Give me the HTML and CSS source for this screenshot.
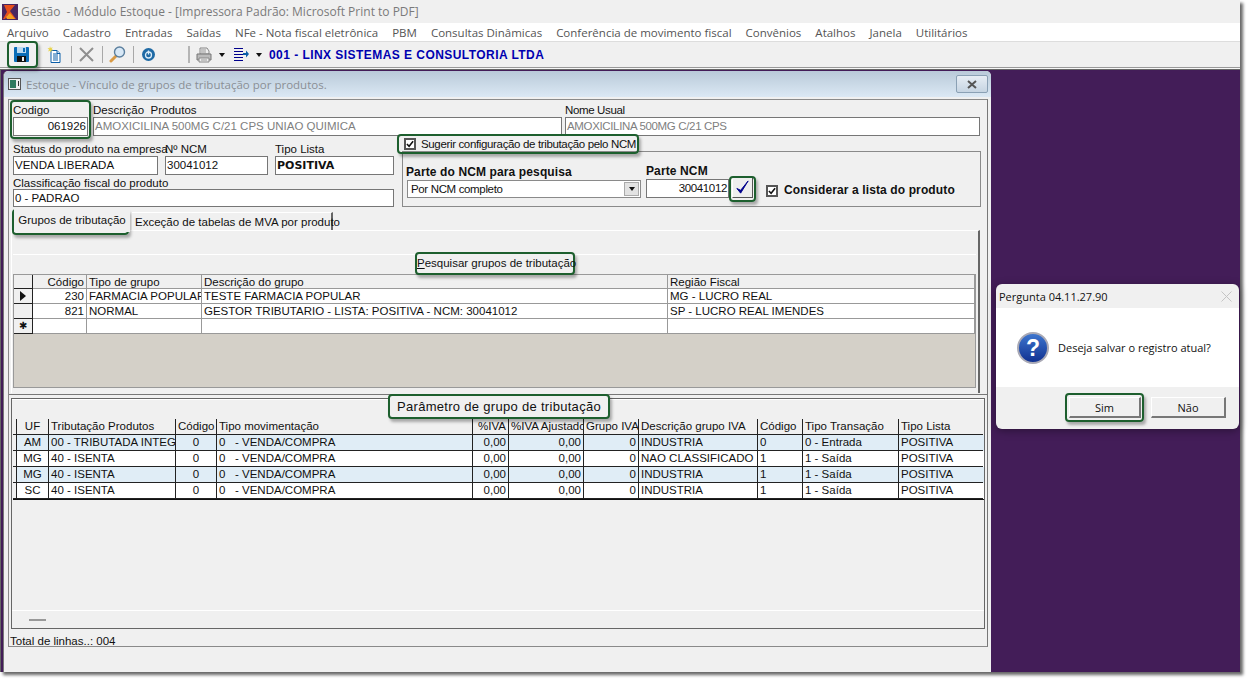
FILE: index.html
```html
<!DOCTYPE html>
<html lang="pt-BR">
<head>
<meta charset="utf-8">
<title>Gestão - Módulo Estoque</title>
<link rel="stylesheet" href="styles.css">
</head>
<body>
<div class="screen">
  <div class="app">
    <div class="titlebar">
      <svg class="logo" viewBox="0 0 16 16"><rect width="16" height="16" fill="#4a2560"/><path d="M2 1h11L8 7l6 8H9L6 11l-3 4H1l4-7z" fill="#e8501c"/><path d="M4 13l4-4 5 6H5z" fill="#f5a020"/></svg>
      <span class="apptitle">Gestão&nbsp; - Módulo Estoque - [Impressora Padrão: Microsoft Print to PDF]</span>
    </div>
    <nav class="menubar">
      <span>Arquivo</span><span>Cadastro</span><span>Entradas</span><span>Saídas</span><span>NFe - Nota fiscal eletrônica</span><span>PBM</span><span>Consultas Dinâmicas</span><span>Conferência de movimento fiscal</span><span>Convênios</span><span>Atalhos</span><span>Janela</span><span>Utilitários</span>
    </nav>
    <div class="toolbar">
      <svg class="ti i-save" viewBox="0 0 15 15"><rect width="15" height="15" rx="1" fill="#0b6db8"/><rect x="3" y="0" width="9" height="6" fill="#bcd9f0"/><rect x="9" y="1" width="2" height="4" fill="#0b6db8"/><rect x="3" y="9" width="9" height="6" fill="#111"/><rect x="8" y="10" width="2" height="4" fill="#eee"/></svg>
      <svg class="ti i-new" viewBox="0 0 15 17"><path d="M4 4.5h6l3 3v9H4z" fill="#fff" stroke="#0b5ea8"/><path d="M6 8h5M6 10h5M6 12h5M6 14h5" stroke="#0b5ea8"/><path d="M10 4.5v3h3" fill="#cfe3f5" stroke="#0b5ea8"/><path d="M3 0l.7 2 2-.7-1 1.8 1.6 1.2-2 .2-.3 2-1.1-1.7-2 .6 1.2-1.6L.5 2l2 .3z" fill="#e8d44a"/></svg>
      <span class="sep s-x"></span>
      <svg class="ti i-x" viewBox="0 0 15 15"><path d="M1 1l13 13M14 1L1 14" stroke="#8f8f8f" stroke-width="2"/></svg>
      <span class="sep s-mag"></span>
      <svg class="ti i-mag" viewBox="0 0 17 17"><path d="M2 15l5-5" stroke="#d99a45" stroke-width="3" stroke-linecap="round"/><circle cx="10.5" cy="6" r="5" fill="#d8e8f6" stroke="#5b7f9e" stroke-width="1.4"/></svg>
      <span class="sep s-pow"></span>
      <svg class="ti i-pow" viewBox="0 0 13 13"><circle cx="6.5" cy="6.5" r="6.5" fill="#1f6aa5"/><circle cx="6.5" cy="7" r="3" fill="none" stroke="#dcecf8" stroke-width="1.3"/><path d="M6.5 2.5v4" stroke="#dcecf8" stroke-width="1.3"/></svg>
      <span class="sep s-print"></span>
      <svg class="ti i-print" viewBox="0 0 16 16"><path d="M4 1h7l2 3v3H4z" fill="#eee" stroke="#888"/><path d="M1 7h14v6H1z" fill="#bbb" stroke="#777"/><path d="M3 11h10v4H3z" fill="#eee" stroke="#888"/><path d="M5 3h5M5 5h5M5 13h6" stroke="#999"/></svg>
      <span class="drop d-print"></span>
      <svg class="ti i-list" viewBox="0 0 15 13"><path d="M0 .5h9M0 3.5h9M0 6.5h9M0 9.5h9M0 12.5h9" stroke="#00008c"/><path d="M9 5h3V2.5L15 6l-3 3.500V7H9z" fill="#0b5ea8"/></svg>
      <span class="drop d-list"></span>
      <span class="company">001 - LINX SISTEMAS E CONSULTORIA LTDA</span>
    </div>
    <div class="toolrule"></div>
    <div class="desktop">
      <section class="child">
        <header class="childtitle">
          <svg class="childicon" viewBox="0 0 13 12"><rect x=".5" y=".5" width="12" height="11" fill="#eee" stroke="#555"/><rect x="2" y="2" width="6" height="8" fill="#2f7a5f"/><rect x="10" y="3" width="1" height="5" fill="#333"/></svg>
          <span class="childname">Estoque - Vínculo de grupos de tributação por produtos.</span>
          <span class="closebtn"><svg viewBox="0 0 10 9"><path d="M1 1l8 7M9 1L1 8" stroke="#555" stroke-width="2"/></svg></span>
        </header>
        <div class="panel">
          <div class="row-one">
            <div class="field f-code"><label>Codigo</label><div class="box right">061926</div></div>
            <div class="field f-desc"><label>Descrição&nbsp; Produtos</label><div class="box muted">AMOXICILINA 500MG C/21 CPS UNIAO QUIMICA</div></div>
            <div class="field f-usual"><label class="narrow">Nome Usual</label><div class="box muted narrowval">AMOXICILINA 500MG C/21 CPS</div></div>
          </div>
          <div class="row-two">
            <div class="leftcol">
              <div class="status-row">
                <div class="field f-status"><label>Status do produto na empresa</label><div class="box">VENDA LIBERADA</div></div>
                <div class="field f-ncm"><label>Nº NCM</label><div class="box">30041012</div></div>
                <div class="field f-tipo"><label>Tipo Lista</label><div class="box heavy">POSITIVA</div></div>
              </div>
              <div class="field f-class"><label>Classificação fiscal do produto</label><div class="box">0 - PADRAO</div></div>
            </div>
            <div class="rightcol">
              <div class="suggest"><span class="check"><svg viewBox="0 0 9 9"><path d="M1 4.500l2.500 2.500L8 1.500" fill="none" stroke="#111" stroke-width="1.800"/></svg></span><span class="narrow">Sugerir configuração de tributação pelo NCM</span></div>
              <div class="ncmbox">
                <div class="ncm-part"><b>Parte do NCM para pesquisa</b>
                  <div class="combo"><span class="narrow">Por NCM completo</span><span class="comboarrow"></span></div>
                </div>
                <div class="ncm-num"><b>Parte NCM</b><div class="numrow"><div class="box right narrow nf">30041012</div>
                  <span class="okbtn"><svg viewBox="0 0 16 16"><path d="M2 9l4 5L14 1l-8 10z" fill="#00008c" stroke="#00008c"/></svg></span></div></div>
                <div class="consider"><span class="check"><svg viewBox="0 0 9 9"><path d="M1 4.500l2.500 2.500L8 1.500" fill="none" stroke="#111" stroke-width="1.800"/></svg></span><b>Considerar a lista do produto</b></div>
              </div>
            </div>
          </div>
          <div class="tabs">
            <span class="tab active">Grupos de tributação</span>
            <span class="tab other">Exceção de tabelas de MVA por produto</span>
          </div>
          <div class="tabpage">
            <div class="pagebar"></div>
            <div class="grid1">
              <div class="g1 g1head"><span class="ind"></span><span class="r">Código</span><span>Tipo de grupo</span><span>Descrição do grupo</span><span>Região Fiscal</span></div>
              <div class="g1"><span class="ind"><i class="arrowmark"></i></span><span class="r">230</span><span>FARMACIA POPULAR</span><span>TESTE FARMACIA POPULAR</span><span>MG - LUCRO REAL</span></div>
              <div class="g1"><span class="ind"></span><span class="r">821</span><span>NORMAL</span><span>GESTOR TRIBUTARIO - LISTA: POSITIVA - NCM: 30041012</span><span>SP - LUCRO REAL IMENDES</span></div>
              <div class="g1"><span class="ind star">✱</span><span></span><span></span><span></span><span></span></div>
            </div>
          </div>
          <div class="split"></div>
          <div class="params">
            <div class="parambar"></div>
            <div class="grid2">
              <div class="g2 g2head"><span></span><span class="c">UF</span><span>Tributação Produtos</span><span class="c">Código</span><span>Tipo movimentação</span><span class="r">%IVA</span><span class="r">%IVA Ajustado</span><span class="r">Grupo IVA</span><span>Descrição grupo IVA</span><span>Código</span><span>Tipo Transação</span><span>Tipo Lista</span></div>
              <div class="g2 tint"><span></span><span class="c">AM</span><span>00 - TRIBUTADA INTEG</span><span class="c">0</span><span>0 &nbsp; - VENDA/COMPRA</span><span class="r">0,00</span><span class="r">0,00</span><span class="r">0</span><span>INDUSTRIA</span><span>0</span><span>0 - Entrada</span><span>POSITIVA</span></div>
              <div class="g2"><span></span><span class="c">MG</span><span>40 - ISENTA</span><span class="c">0</span><span>0 &nbsp; - VENDA/COMPRA</span><span class="r">0,00</span><span class="r">0,00</span><span class="r">0</span><span>NAO CLASSIFICADO</span><span>1</span><span>1 - Saída</span><span>POSITIVA</span></div>
              <div class="g2 tint"><span></span><span class="c">MG</span><span>40 - ISENTA</span><span class="c">0</span><span>0 &nbsp; - VENDA/COMPRA</span><span class="r">0,00</span><span class="r">0,00</span><span class="r">0</span><span>INDUSTRIA</span><span>1</span><span>1 - Saída</span><span>POSITIVA</span></div>
              <div class="g2"><span></span><span class="c">SC</span><span>40 - ISENTA</span><span class="c">0</span><span>0 &nbsp; - VENDA/COMPRA</span><span class="r">0,00</span><span class="r">0,00</span><span class="r">0</span><span>INDUSTRIA</span><span>1</span><span>1 - Saída</span><span>POSITIVA</span></div>
            </div>
            <div class="gridfoot"><span class="footbar"></span></div>
          </div>
          <div class="total">Total de linhas..: 004</div>
        </div>
      </section>
    </div>
  </div>

  <aside class="dialog">
    <div class="dlgtitle"><span>Pergunta 04.11.27.90</span><svg class="dlgx" viewBox="0 0 11 11"><path d="M.5.5l10 10M10.500.5l-10 10" stroke="#c4c4c4"/></svg></div>
    <div class="dlgbody">
      <svg class="qicon" viewBox="0 0 32 32"><defs><linearGradient id="qg" x1="0" y1="0" x2="0" y2="1"><stop offset="0" stop-color="#3f78d0"/><stop offset="1" stop-color="#0f2f8f"/></linearGradient></defs><circle cx="16" cy="16" r="15" fill="url(#qg)" stroke="#a9a9b5" stroke-width="2"/><text x="16" y="24" class="qmark">?</text></svg>
      <span>Deseja salvar o registro atual?</span>
    </div>
    <div class="dlgfoot"><span class="dlgbtn sim">Sim</span><span class="dlgbtn nao">Não</span></div>
  </aside>

  <div class="callout c-save"></div>
  <div class="callout c-code"></div>
  <div class="callout c-suggest"></div>
  <div class="callout c-ok"></div>
  <div class="callout c-tab"></div>
  <div class="callout c-search filled"><u>P</u>esquisar grupos de tributação</div>
  <div class="callout c-param filled">Parâmetro de grupo de tributação</div>
  <div class="callout c-sim"></div>
</div>
</body>
</html>
```
FILE: styles.css
```css
* { box-sizing: border-box; }
html, body { margin: 0; padding: 0; background: #fff; }
body { font-family: "Liberation Sans", Arial, sans-serif; font-size: 12px; color: #111; }
.screen { position: relative; width: 1248px; height: 680px; overflow: hidden; background: #fff; }
.app { width: 1240px; height: 672px; display: flex; flex-direction: column; box-shadow: 3px 3px 3px rgba(0,0,0,.6); background: #f0f0f0; }

.titlebar { height: 23px; display: flex; align-items: center; padding-left: 2px; background: #f0f0f0; flex: none; }
.logo { width: 16px; height: 16px; }
.apptitle { margin-left: 3px; font-family: "Open Sans", sans-serif; font-size: 12px; color: #7a7a7a; white-space: nowrap; }
.menubar { height: 18px; flex: none; background: #fff; display: flex; align-items: center; padding-left: 7px; gap: 14px; font-family: "Open Sans", sans-serif; font-size: 11.500px; color: #555; white-space: nowrap; }
.toolbar { height: 26px; flex: none; display: flex; align-items: center; background: #f0f0f0; border-top: 1px solid #ddd; }
.toolrule { height: 3px; flex: none; background: #f7f7f7; border-top: 1px solid #999; border-bottom: 1px solid #666; }
.ti { flex: none; display: block; }
.i-save { width: 15px; height: 15px; margin-left: 14px; }
.i-new { width: 15px; height: 17px; margin-left: 18px; }
.sep { width: 1px; height: 17px; flex: none; background: #a8a8a8; }
.s-x { margin-left: 9px; }
.i-x { width: 15px; height: 15px; margin-left: 7px; }
.s-mag { margin-left: 8px; }
.i-mag { width: 17px; height: 17px; margin-left: 6px; }
.s-pow { margin-left: 7px; }
.i-pow { width: 13px; height: 13px; margin-left: 8px; }
.s-print { margin-left: 33px; width: 2px; background: #b5b5b5; }
.i-print { width: 16px; height: 16px; margin-left: 6px; }
.drop { width: 0; height: 0; flex: none; border-left: 3.500px solid transparent; border-right: 3.500px solid transparent; border-top: 4px solid #111; }
.d-print { margin-left: 7px; }
.i-list { width: 15px; height: 13px; margin-left: 9px; }
.d-list { margin-left: 7px; }
.company { margin-left: 7px; font-family: "Liberation Sans", sans-serif; font-weight: 700; font-size: 12px; color: #0000b0; letter-spacing: .45px; white-space: nowrap; }

.desktop { flex: 1; min-height: 0; background: #431d58; padding: 1px 0 0 2px; border-left: 1px solid #666; }
.child { width: 988px; height: 601px; background: #f0f0f0; border-radius: 5px 5px 0 0; display: flex; flex-direction: column; border-left: 1px solid #777; }
.childtitle { height: 26px; flex: none; display: flex; align-items: center; padding: 0 3px 0 4px; background: linear-gradient(#b9cad9, #dbe8f4); border-radius: 5px 5px 0 0; }
.childicon { width: 13px; height: 12px; flex: none; }
.childname { margin-left: 5px; font-family: "Open Sans", sans-serif; font-size: 11.500px; color: #8a8f95; flex: 1; white-space: nowrap; }
.closebtn { width: 32px; height: 18px; flex: none; display: flex; align-items: center; justify-content: center; border: 1px solid #8aa0b4; border-radius: 2px; background: linear-gradient(#e6edf4, #c6d4e2); }
.closebtn svg { width: 10px; height: 9px; }

.panel { margin: 2px 0 0 4px; width: 980px; height: 548px; border: 1px solid #8a8a8a; border-right-color: #777; flex: none; font-size: 11.500px; padding: 4px 0 0; }
.row-one { display: flex; padding-left: 4px; height: 32px; }
.field { display: flex; flex-direction: column; }
.field label { height: 13px; line-height: 12px; white-space: nowrap; }
.box { height: 19px; line-height: 17px; border: 1px solid #767676; background: #fff; padding: 0 1px; white-space: nowrap; overflow: hidden; }
.right { text-align: right; }
.muted { color: #808080; }
.heavy { font-weight: 700; font-family: "DejaVu Sans", sans-serif; font-size: 11px; color: #111; }
.narrow { letter-spacing: -.35px; }
.narrowval { letter-spacing: -.35px; }
.f-code { width: 75px; }
.f-desc { width: 469px; margin-left: 5px; }
.f-usual { width: 415px; margin-left: 3px; }
.row-two { display: flex; padding-left: 4px; height: 72px; }
.leftcol { width: 381px; flex: none; padding-top: 7px; }
.status-row { display: flex; }
.f-status { width: 145px; }
.f-ncm { width: 103px; margin-left: 7px; }
.f-tipo { width: 119px; margin-left: 7px; }
.f-class { margin-top: 2px; }
.f-class label { height: 12px; }
.f-class .box { height: 18px; }
.rightcol { margin-left: 8px; width: 579px; flex: none; }
.suggest { height: 15px; display: flex; align-items: center; gap: 5px; padding-left: 2px; white-space: nowrap; }
.check { width: 12px; height: 12px; flex: none; display: flex; align-items: center; justify-content: center; background: #fff; border: 2px solid #555; }
.check svg { width: 8px; height: 8px; }
.ncmbox { height: 56px; border: 1px solid #8a8a8a; display: flex; align-items: flex-end; padding: 0 0 8px 3px; }
.ncmbox b { display: block; height: 14px; line-height: 13px; font-size: 12px; letter-spacing: .12px; white-space: nowrap; }
.ncm-part { width: 239px; flex: none; }
.combo { width: 234px; height: 18px; margin-left: 1px; background: #fff; border: 1px solid #8a8a8a; display: flex; align-items: center; justify-content: space-between; padding: 0 1px 0 3px; }
.comboarrow { width: 15px; height: 14px; background: #e2e2e2; border: 1px solid #aaa; position: relative; display: flex; align-items: center; justify-content: center; }
.comboarrow::after { content: ""; border-left: 3.500px solid transparent; border-right: 3.500px solid transparent; border-top: 4px solid #111; }
.ncm-num { margin-left: 1px; width: 110px; flex: none; }
.numrow { display: flex; align-items: center; gap: 3px; }
.nf { width: 83px; }
.okbtn { width: 21px; height: 21px; flex: none; margin-top: -2px; background: #eee; border: 1px solid #fff; border-right-color: #555; border-bottom-color: #555; display: flex; align-items: center; justify-content: center; }
.okbtn svg { width: 15px; height: 15px; }
.consider { display: flex; align-items: center; gap: 6px; margin-left: 10px; height: 14px; }
.tabs { display: flex; height: 22px; padding-left: 5px; margin-top: 0; position: relative; z-index: 1; }
.tab { white-space: nowrap; }
.active { width: 116px; height: 23px; line-height: 23px; margin-top: 1px; text-align: center; background: #f0f0f0; }
.other { height: 18px; margin: 4px 0 0 2px; width: 201px; line-height: 19px; padding-left: 3px; background: #f0f0f0; border-top: 1px solid #fff; border-right: 2px solid #666; }
.tabpage { margin: 0 0 0 2px; width: 969px; height: 163px; border-left: 1px solid #fff; border-top: 1px solid #fff; border-right: 2px solid #666; padding: 23px 0 0 1px; }
.pagebar { height: 20px; width: 963px; border-top: 1px solid #fff; }
.grid1 { width: 963px; height: 114px; background: #d4d0c8; border-top: 1px solid #999; border-left: 1px solid #999; border-bottom: 1px solid #999; border-right: 1px solid #999; }
.g1 { display: grid; grid-template-columns: 19px 54px 115px 466px 307px; height: 15px; background: #fff; line-height: 14px; }
.g1 > span { border-right: 1px solid #999; border-bottom: 1px solid #999; padding: 0 2px; white-space: nowrap; overflow: hidden; }
.g1head { background: #f0f0f0; height: 14px; }
.g1 > .ind { background: #f0f0f0; border-right: 1px solid #222; border-bottom: 1px solid #222; display: flex; align-items: center; justify-content: center; padding: 0; }
.r { text-align: right; }
.c { text-align: center; }
.arrowmark { width: 0; height: 0; border-top: 5px solid transparent; border-bottom: 5px solid transparent; border-left: 6px solid #111; }
.star { font-size: 10px; }
.split { height: 4px; border-top: 1px solid #777; width: 978px; margin-top: 1px; }
.params { margin-left: 2px; width: 974px; height: 231px; border: 1px solid #666; display: flex; flex-direction: column; }
.parambar { height: 20px; flex: none; border-top: 1px solid #fff; }
.grid2 { width: 971px; margin-left: 1px; flex: none; border-bottom: 1px solid #111; }
.g2 { display: grid; grid-template-columns: 4px 32px 127px 41px 256px 36px 75px 55px 119px 45px 96px 84px; height: 16px; line-height: 15px; background: #fff; }
.g2 > span { border-right: 1px solid #222; border-bottom: 1px solid #222; padding: 0 2px; white-space: nowrap; overflow: hidden; }
.g2 > span:first-child { padding: 0; background: #f0f0f0; }
.g2 > span:last-child { border-right: 0; }
.g2head { background: #f0f0f0; height: 16px; }
.tint { background: #e0edf6; }
.g2 > span + span { font-size: 11.500px; }
.gridfoot { margin-top: auto; height: 18px; border-top: 1px solid #fff; padding: 8px 0 0 17px; }
.footbar { display: block; width: 17px; height: 2px; background: #999; }
.total { height: 19px; line-height: 24px; padding-left: 1px; }

.dialog { position: absolute; left: 996px; top: 284px; width: 243px; height: 145px; border-radius: 6px; background: #f0f0f0; display: flex; flex-direction: column; font-family: "Open Sans", sans-serif; font-size: 11px; box-shadow: 0 2px 8px rgba(0,0,0,.35); overflow: hidden; color: #111; }
.dlgtitle { height: 24px; flex: none; display: flex; align-items: center; justify-content: space-between; padding: 0 7px 0 3px; }
.dlgx { width: 11px; height: 11px; }
.dlgbody { height: 79px; flex: none; background: #fff; display: flex; align-items: center; gap: 9px; padding-left: 21px; }
.qicon { width: 32px; height: 32px; flex: none; }
.qmark { font-family: "Liberation Sans", sans-serif; font-size: 23px; font-weight: 700; fill: #fff; text-anchor: middle; }
.dlgfoot { flex: 1; display: flex; padding: 10px 13px 0 73px; gap: 10px; }
.dlgbtn { height: 21px; line-height: 20px; text-align: center; background: #f0f0f0; border: 1px solid #fff; border-right: 2px solid #777; border-bottom: 2px solid #777; }
.sim { width: 72px; }
.nao { width: 75px; }

.callout { position: absolute; border: 2px solid #1d5f2e; border-radius: 4px; box-shadow: 2px 3px 3px rgba(0,0,0,.3); pointer-events: none; }
.filled { background: #f0f0f0; text-align: center; white-space: nowrap; }
.c-save { left: 7px; top: 41px; width: 31px; height: 27px; }
.c-code { left: 10px; top: 100px; width: 81px; height: 39px; }
.c-suggest { left: 397px; top: 134px; width: 242px; height: 20px; }
.c-ok { left: 729px; top: 176px; width: 27px; height: 26px; }
.c-tab { left: 12px; top: 209px; width: 117px; height: 26px; }
.c-search { left: 415px; top: 252px; width: 160px; height: 23px; font-size: 11.500px; line-height: 19px; }
.c-param { left: 388px; top: 394px; width: 222px; height: 25px; font-size: 13px; line-height: 21px; letter-spacing: .3px; }
.c-sim { left: 1065px; top: 393px; width: 79px; height: 29px; }
```
